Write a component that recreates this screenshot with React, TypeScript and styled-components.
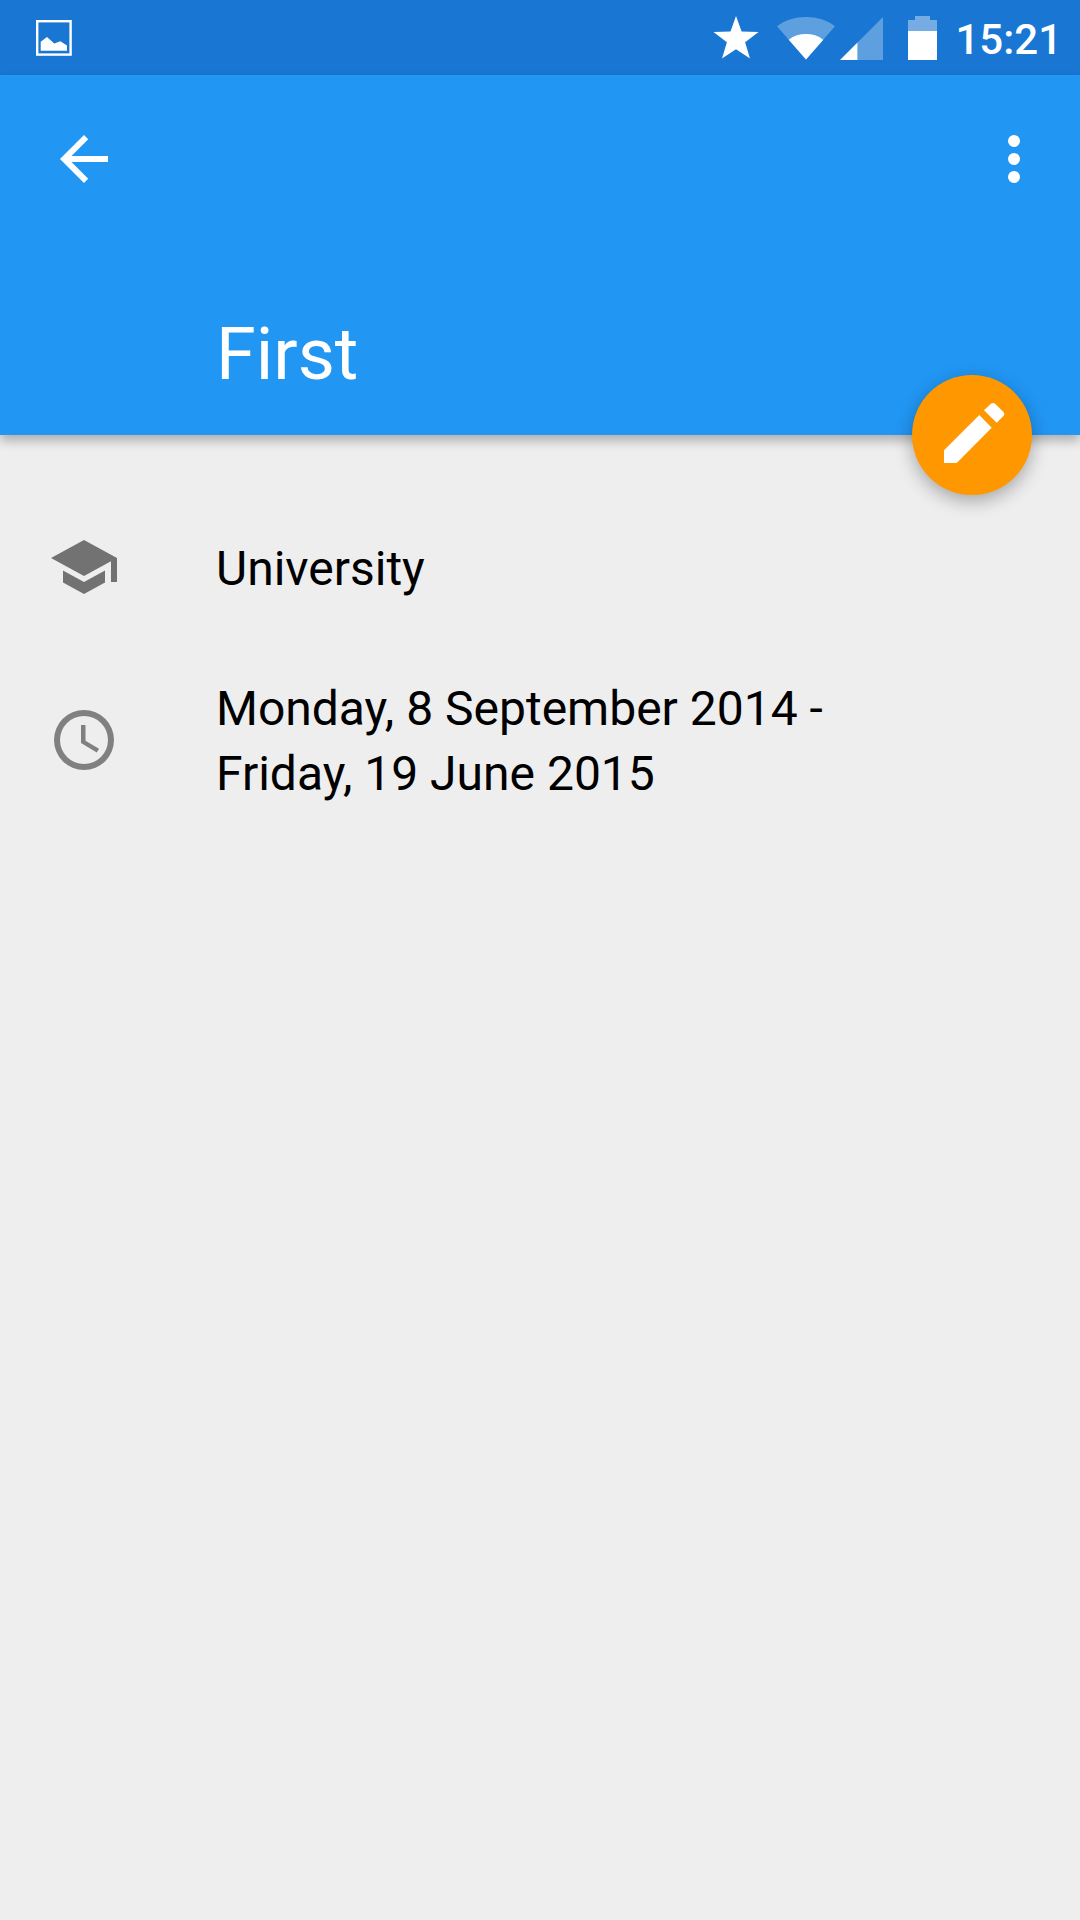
import React from "react";
import styled, { createGlobalStyle } from "styled-components";

const GlobalStyle = createGlobalStyle`
  *, *::before, *::after { box-sizing: border-box; }
  body {
    margin: 0;
    background: #eeeeee;
    font-family: Roboto, "Noto Sans", sans-serif;
  }
`;

const Screen = styled.div`
  display: flex;
  flex-direction: column;
  min-height: 100vh;
  background: #eeeeee;
  color: #000000;
`;

const StatusBar = styled.div`
  display: flex;
  align-items: center;
  justify-content: space-between;
  height: 75px;
  padding: 0 18px 0 36px;
  background: #1976d2;
  color: #ffffff;
`;

const StatusIcons = styled.div`
  display: flex;
  align-items: center;
`;

const Glyph = styled.svg<{ $gap?: number }>`
  display: block;
  flex: none;
  margin-right: ${(p) => p.$gap ?? 0}px;
`;

const Clock = styled.time`
  padding-top: 4px;
  font-size: 42px;
  font-weight: 500;
  line-height: 48px;
`;

const Header = styled.header`
  position: relative;
  display: flex;
  flex-direction: column;
  justify-content: space-between;
  min-height: 360px;
  padding-bottom: 38px;
  background: #2196f3;
  color: #ffffff;
  box-shadow: 0 6px 10px rgba(0, 0, 0, 0.26);
`;

const Toolbar = styled.div`
  display: flex;
  align-items: center;
  justify-content: space-between;
  height: 168px;
  padding: 0 30px 0 48px;
`;

const IconButton = styled.button`
  display: flex;
  padding: 0;
  border: 0;
  background: none;
  color: inherit;
  cursor: pointer;
`;

const Title = styled.h1`
  margin: 0;
  padding: 0 216px;
  font-size: 72px;
  font-weight: 400;
  line-height: 84px;
`;

const EditButton = styled(IconButton)`
  position: absolute;
  right: 48px;
  bottom: -60px;
  border-radius: 50%;
  background: #ff9800;
  box-shadow: 0 6px 18px rgba(0, 0, 0, 0.3);
`;

const Details = styled.ul`
  display: flex;
  flex-direction: column;
  gap: 70px;
  margin: 0;
  padding: 96px 48px;
  list-style: none;
`;

const Detail = styled.li`
  display: grid;
  grid-template-columns: 72px 1fr;
  column-gap: 96px;
  align-items: center;
`;

const DetailText = styled.span`
  padding-top: 3px;
  font-size: 48px;
  line-height: 65px;
`;

export default function App() {
  return (
    <Screen>
      <GlobalStyle />
      <StatusBar>
        <Glyph width="36" height="36" viewBox="0 0 36 36" role="img" aria-label="Screenshot saved">
          <rect x="1.2" y="1.2" width="33.4" height="33.4" fill="none" stroke="#fff" strokeWidth="2.4" />
          <path d="M4.7 21.7 11 17l7.3 6.6 6-2.4 6.7 4.2v5.3H4.7z" fill="#fff" />
        </Glyph>
        <StatusIcons>
          <Glyph $gap={18} width="46" height="44" viewBox="0 0 46 44" role="img" aria-label="Priority">
            <path
              d="M23 0l5.6 15.6 17 .5-13.5 10.2 4.9 16.2L23 33.2 9 42.5l4.9-16.2L.5 16.1l17-.5z"
              fill="#fff"
            />
          </Glyph>
          <Glyph $gap={5} width="58" height="44" viewBox="0 0 58 44" role="img" aria-label="Wi-Fi">
            <path d="M29 43.5 0 10.2C8.5 3.7 18.4 1 29 1s20.5 2.7 29 9.2z" fill="#fff" opacity=".3" />
            <path d="M29 43.5 11.7 23.7C16.8 19.7 22.8 18 29 18s12.2 1.7 17.3 5.7z" fill="#fff" />
          </Glyph>
          <Glyph $gap={25} width="43" height="44" viewBox="0 0 43 44" role="img" aria-label="Mobile signal">
            <path d="M43 1v43H17.5V26.5z" fill="#fff" opacity=".3" />
            <path d="M17.5 26.5V44H0z" fill="#fff" />
          </Glyph>
          <Glyph $gap={18} width="29" height="44" viewBox="0 0 29 44" role="img" aria-label="Battery">
            <path d="M7 0h15v4h7v11H0V4h7z" fill="#fff" opacity=".4" />
            <path d="M0 15h29v29H0z" fill="#fff" />
          </Glyph>
          <Clock>15:21</Clock>
        </StatusIcons>
      </StatusBar>

      <Header>
        <Toolbar>
          <IconButton type="button" aria-label="Back">
            <Glyph width="72" height="72" viewBox="0 0 24 24" fill="currentColor">
              <path d="M20 11H7.83l5.59-5.59L12 4l-8 8 8 8 1.41-1.41L7.83 13H20v-2z" />
            </Glyph>
          </IconButton>
          <IconButton type="button" aria-label="More options">
            <Glyph width="72" height="72" viewBox="0 0 24 24" fill="currentColor">
              <circle cx="12" cy="6" r="2" />
              <circle cx="12" cy="12" r="2" />
              <circle cx="12" cy="18" r="2" />
            </Glyph>
          </IconButton>
        </Toolbar>
        <Title>First</Title>
        <EditButton type="button" aria-label="Edit">
          <Glyph width="120" height="120" viewBox="0 0 120 120" fill="#fff">
            <path d="M32 75.3V88h12.7l35-35.3L67.3 40z" />
            <path d="M72 35.3l6.6-6.2q2.4-2.4 4.8 0l7.800 7.600q2.200 2.400 0 4.600L84.700 47.700z" />
          </Glyph>
        </EditButton>
      </Header>

      <main>
        <Details>
          <Detail>
            <Glyph width="72" height="72" viewBox="0 0 24 24" fill="#727272" role="img" aria-label="Place">
              <path d="M5 13.18v4L12 21l7-3.82v-4L12 17l-7-3.82zM12 3L1 9l11 6 9-4.91V17h2V9L12 3z" />
            </Glyph>
            <DetailText>University</DetailText>
          </Detail>
          <Detail>
            <Glyph width="72" height="72" viewBox="0 0 24 24" fill="#808080" role="img" aria-label="Dates">
              <path d="M12 2a10 10 0 1 0 0 20 10 10 0 0 0 0-20zm0 18a8 8 0 1 1 0-16 8 8 0 0 1 0 16z" />
              <path d="M12.5 7H11v6l5.25 3.15.75-1.23-4.5-2.67z" />
            </Glyph>
            <DetailText>
              Monday, 8 September 2014 -<br />
              Friday, 19 June 2015
            </DetailText>
          </Detail>
        </Details>
      </main>
    </Screen>
  );
}
